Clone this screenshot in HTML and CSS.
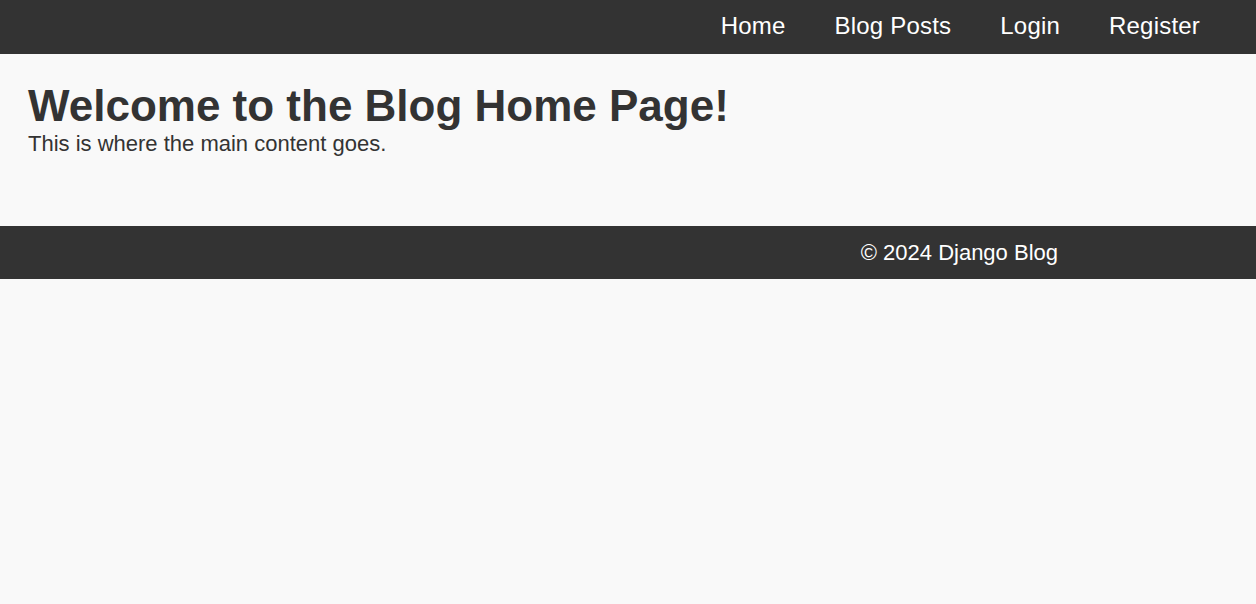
FILE: index.html
```html
<!DOCTYPE html>
<html lang="en">
<head>
<meta charset="utf-8">
<title>Django Blog</title>
<link rel="stylesheet" href="styles.css">
</head>
<body>
<header class="site-header">
  <nav class="nav">
    <a class="nav-link" href="#">Home</a>
    <a class="nav-link" href="#">Blog Posts</a>
    <a class="nav-link" href="#">Login</a>
    <a class="nav-link" href="#">Register</a>
  </nav>
</header>
<main class="content">
  <h1 class="title">Welcome to the Blog Home Page!</h1>
  <p class="lead">This is where the main content goes.</p>
</main>
<footer class="site-footer">
  <p class="copyright">© 2024 Django Blog</p>
</footer>
</body>
</html>
```
FILE: styles.css
```css
html, body {
  margin: 0;
  padding: 0;
}
body {
  background: #f9f9f9;
  color: #333333;
  font-family: "Liberation Sans", Arial, sans-serif;
}
.site-header {
  background: #333333;
}
.nav {
  display: flex;
  justify-content: flex-end;
  gap: 49px;
  padding: 12px 56px 14px 0;
}
.nav-link {
  color: #ffffff;
  text-decoration: none;
  font-size: 24px;
  line-height: 27.6px;
  letter-spacing: 0.2px;
}
.content {
  padding: 27px 28px 70px;
}
.title {
  margin: 0;
  font-size: 44px;
  font-weight: bold;
  line-height: 50.6px;
}
.lead {
  margin: 0;
  font-size: 22px;
  line-height: 25.3px;
}
.site-footer {
  background: #333333;
  display: flex;
  justify-content: flex-end;
  padding: 14px 198px 13px 0;
}
.copyright {
  margin: 0;
  color: #ffffff;
  font-size: 22px;
  line-height: 25.3px;
}
```
